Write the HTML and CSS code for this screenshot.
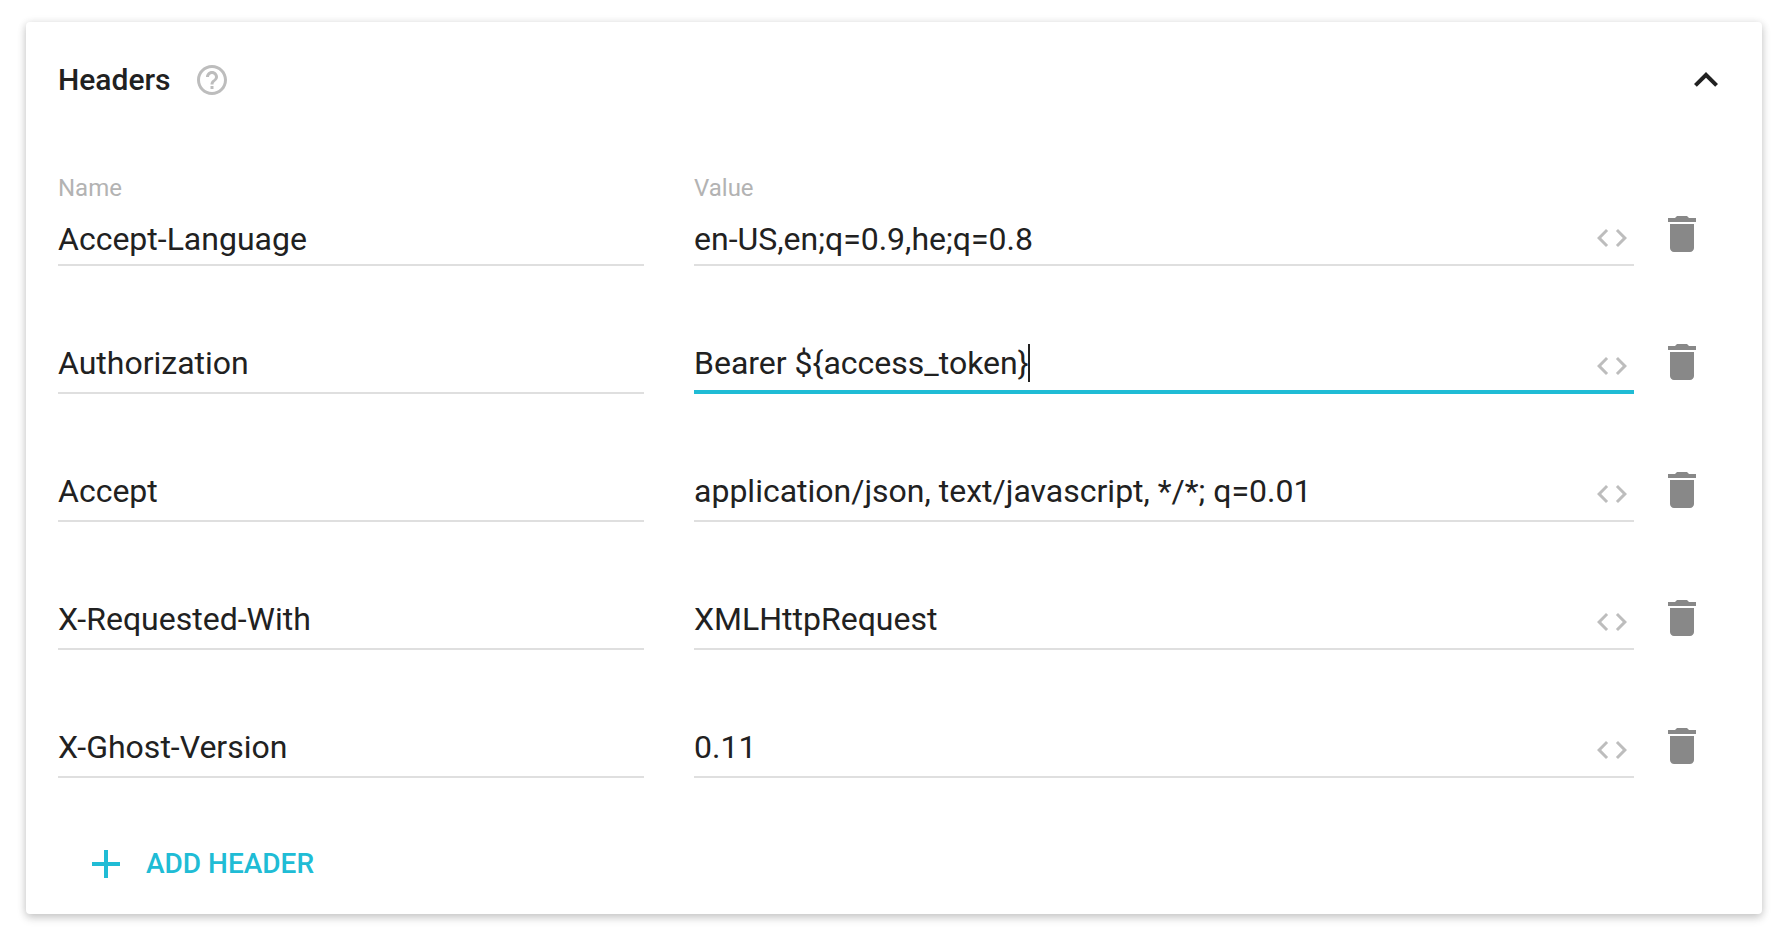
FILE: index.html
```html
<!DOCTYPE html>
<html lang="en">
<head>
<meta charset="utf-8">
<meta name="viewport" content="width=device-width, initial-scale=1">
<title>Headers</title>
<link rel="stylesheet" href="styles.css">
</head>
<body>
<svg class="sprite" aria-hidden="true">
  <symbol id="code" viewBox="0 0 24 24"><path d="M9.4 16.6L4.8 12l4.6-4.6L8 6l-6 6 6 6 1.4-1.4zm5.2 0l4.6-4.6-4.6-4.6L16 6l6 6-6 6-1.4-1.4z"/></symbol>
  <symbol id="trash" viewBox="0 0 24 24"><path d="M6 19c0 1.100.9 2 2 2h8c1.100 0 2-.9 2-2V7H6v12zM19 4h-3.500l-1-1h-5l-1 1H5v2h14V4z"/></symbol>
</svg>
<main class="card">
  <header class="card-header">
    <h1 class="title">Headers</h1>
    <button class="icon-button help" type="button" aria-label="Help">
      <svg viewBox="0 0 24 24"><path d="M11 18h2v-2h-2v2zm1-16C6.480 2 2 6.480 2 12s4.480 10 10 10 10-4.480 10-10S17.520 2 12 2zm0 18c-4.410 0-8-3.590-8-8s3.590-8 8-8 8 3.590 8 8-3.590 8-8 8zm0-14c-2.210 0-4 1.790-4 4h2c0-1.100.9-2 2-2s2 .9 2 2c0 2-3 1.750-3 5h2c0-2.250 3-2.500 3-5 0-2.210-1.790-4-4-4z"/></svg>
    </button>
    <button class="icon-button collapse" type="button" aria-label="Collapse" aria-expanded="true">
      <svg viewBox="0 0 24 24"><path d="M12 8l-6 6 1.410 1.410L12 10.830l4.590 4.580L18 14z"/></svg>
    </button>
  </header>

  <form class="rows">
    <div class="row row-first">
      <div class="fields">
        <div class="field">
          <label class="label" for="name-1">Name</label>
          <div class="control"><input class="input" id="name-1" type="text" value="Accept-Language"></div>
        </div>
        <div class="field">
          <label class="label" for="value-1">Value</label>
          <div class="control"><input class="input" id="value-1" type="text" value="en-US,en;q=0.9,he;q=0.8"><button class="icon-button code" type="button" aria-label="Edit value"><svg><use href="#code"/></svg></button></div>
        </div>
      </div>
      <button class="icon-button delete" type="button" aria-label="Delete header"><svg><use href="#trash"/></svg></button>
    </div>

    <div class="row">
      <div class="fields">
        <div class="control"><input class="input" type="text" aria-label="Name" value="Authorization"></div>
        <div class="control active"><input class="input" type="text" aria-label="Value" value="Bearer ${access_token}"><span class="caret"></span><button class="icon-button code" type="button" aria-label="Edit value"><svg><use href="#code"/></svg></button></div>
      </div>
      <button class="icon-button delete" type="button" aria-label="Delete header"><svg><use href="#trash"/></svg></button>
    </div>

    <div class="row">
      <div class="fields">
        <div class="control"><input class="input" type="text" aria-label="Name" value="Accept"></div>
        <div class="control"><input class="input" type="text" aria-label="Value" value="application/json, text/javascript, */*; q=0.01"><button class="icon-button code" type="button" aria-label="Edit value"><svg><use href="#code"/></svg></button></div>
      </div>
      <button class="icon-button delete" type="button" aria-label="Delete header"><svg><use href="#trash"/></svg></button>
    </div>

    <div class="row">
      <div class="fields">
        <div class="control"><input class="input" type="text" aria-label="Name" value="X-Requested-With"></div>
        <div class="control"><input class="input" type="text" aria-label="Value" value="XMLHttpRequest"><button class="icon-button code" type="button" aria-label="Edit value"><svg><use href="#code"/></svg></button></div>
      </div>
      <button class="icon-button delete" type="button" aria-label="Delete header"><svg><use href="#trash"/></svg></button>
    </div>

    <div class="row">
      <div class="fields">
        <div class="control"><input class="input" type="text" aria-label="Name" value="X-Ghost-Version"></div>
        <div class="control"><input class="input" type="text" aria-label="Value" value="0.11"><button class="icon-button code" type="button" aria-label="Edit value"><svg><use href="#code"/></svg></button></div>
      </div>
      <button class="icon-button delete" type="button" aria-label="Delete header"><svg><use href="#trash"/></svg></button>
    </div>
  </form>

  <button class="add" type="button">
    <svg viewBox="0 0 24 24" aria-hidden="true"><path d="M19 13h-6v6h-2v-6H5v-2h6V5h2v6h6v2z"/></svg>
    ADD HEADER
  </button>
</main>
</body>
</html>
```

FILE: styles.css
```css
* {
  box-sizing: border-box;
}

body {
  margin: 0;
  padding: 22px 26px;
  background: #fff;
  color: #212121;
  font-family: Roboto, sans-serif;
}

.sprite {
  display: none;
}

.card {
  padding: 34px 32px 26px;
  border-radius: 4px;
  background: #fff;
  box-shadow:
    0 4px 10px rgba(0, 0, 0, 0.16),
    0 1px 8px rgba(0, 0, 0, 0.12);
}

.card-header {
  display: flex;
  align-items: center;
  height: 48px;
}

.title {
  margin: 0;
  font-size: 30px;
  font-weight: 500;
  line-height: 48px;
}

.icon-button {
  display: block;
  flex: none;
  width: 48px;
  height: 48px;
  padding: 0;
  border: 0;
  background: none;
  color: inherit;
  cursor: pointer;
}

.icon-button svg {
  display: block;
  width: 100%;
  height: 100%;
  fill: currentColor;
}

.help {
  width: 36px;
  height: 36px;
  margin-left: 23px;
  color: #bdbdbd;
}

.collapse {
  margin-left: auto;
}

.rows {
  display: flex;
  flex-direction: column;
  gap: 72px;
  margin-top: 68px;
}

.row {
  display: flex;
  align-items: flex-end;
  gap: 24px;
  padding-right: 24px;
}

.fields {
  display: grid;
  flex: 1;
  grid-template-columns: minmax(0, 293fr) minmax(0, 470fr);
  gap: 50px;
}

.label {
  display: block;
  margin-bottom: 12px;
  color: #b3b3b3;
  font-size: 24px;
  line-height: 32px;
}

.control {
  position: relative;
  display: flex;
  align-items: flex-end;
  border-bottom: 2px solid #dfdfdf;
}

.active {
  border-color: #20bcd5;
  box-shadow: inset 0 -2px #20bcd5;
}

.input {
  flex: 1;
  min-width: 0;
  height: 52px;
  padding: 0 0 6px;
  border: 0;
  outline: 0;
  background: none;
  color: inherit;
  font: 32px/46px Roboto, sans-serif;
}

.row-first .input {
  height: 48px;
  padding-bottom: 2px;
}

.caret {
  position: absolute;
  bottom: 10px;
  left: 334px;
  width: 2px;
  height: 38px;
  background: #212121;
}

.code {
  width: 36px;
  height: 36px;
  margin: 0 4px 8px 0;
  color: #bdbdbd;
}

.delete {
  margin-bottom: 8px;
  color: #888;
}

.add {
  display: flex;
  align-items: center;
  gap: 16px;
  margin: 62px 0 0 24px;
  padding: 0;
  border: 0;
  background: none;
  color: #20bcd5;
  font: 500 28px/48px Roboto, sans-serif;
  cursor: pointer;
}

.add svg {
  width: 48px;
  height: 48px;
  fill: currentColor;
}
```
